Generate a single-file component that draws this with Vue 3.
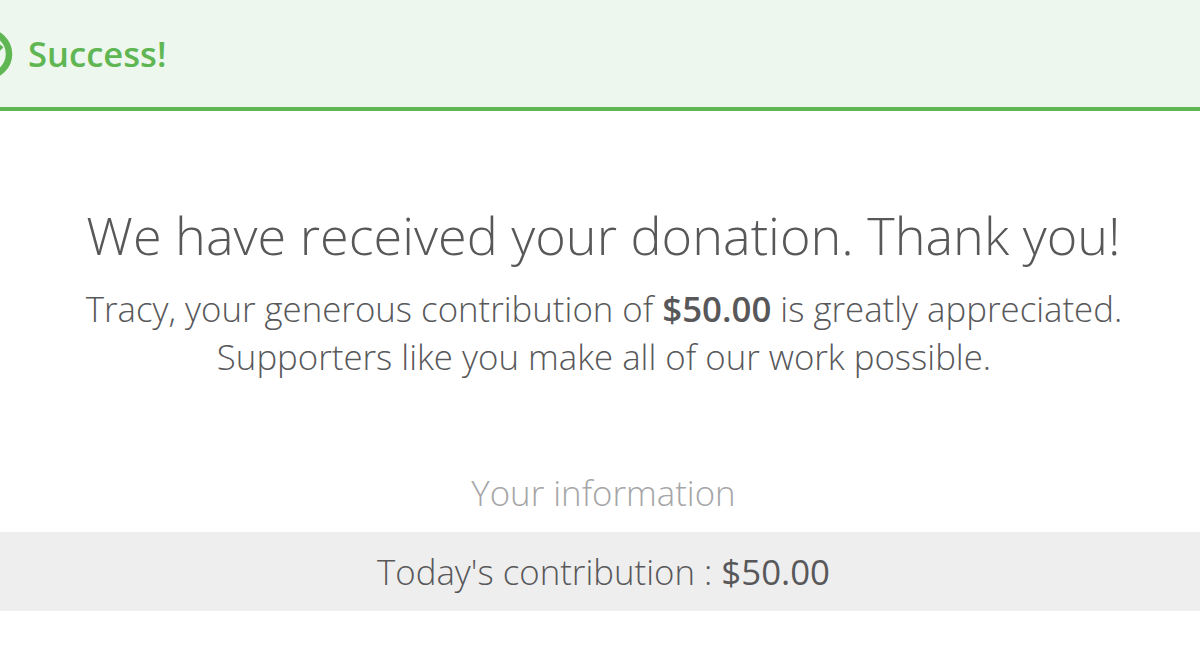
<script setup>
</script>

<template>
  <div class="page">
    <div class="alert">
      <svg class="icon" width="28" height="60" viewBox="0 0 28 60">
        <circle cx="-13" cy="30" r="22" fill="none" stroke="#5fb653" stroke-width="6.5" />
        <path d="M-6 30 L2 22" fill="none" stroke="#5fb653" stroke-width="4" />
      </svg>
      <span class="alert-text">Success!</span>
    </div>
    <div class="body">
      <h1 class="title">We have received your donation. Thank you!</h1>
      <p class="lead">Tracy, your generous contribution of <b>$50.00</b> is greatly appreciated.<br />Supporters like you make all of our work possible.</p>
      <h2 class="sub">Your information</h2>
    </div>
    <div class="row"><div class="row-in">Today's contribution : <span class="amt">$50.00</span></div></div>
  </div>
</template>

<style>
html, body { margin: 0; background: #fff; }
</style>
<style scoped>
.page { height: 649px; overflow: hidden; font-family: "Open Sans", sans-serif; color: #58585a; text-align: center; }
.alert { height: 107px; background: #edf7ed; border-bottom: 4px solid #5fb653; display: flex; align-items: center; text-align: left; }
.icon { flex: none; }
.alert-text { font-size: 34.6px; font-weight: 600; color: #5fb653; }
.body { padding-left: 7px; }
.title { margin: 88px 0 0; font-size: 52.2px; font-weight: 300; line-height: 72px; }
.lead { margin: 14px 0 0; padding-left: 1px; font-size: 34.8px; font-weight: 300; line-height: 48px; }
.lead b { font-weight: 600; }
.sub { margin: 88px 0 0; font-size: 34.8px; font-weight: 300; line-height: 48px; color: #a5a5a7; }
.row { margin-top: 15px; height: 79px; line-height: 79px; background: #eee; font-size: 34.8px; font-weight: 300; }
.row-in { padding-left: 7px; }
.amt { font-weight: 400; }
</style>
